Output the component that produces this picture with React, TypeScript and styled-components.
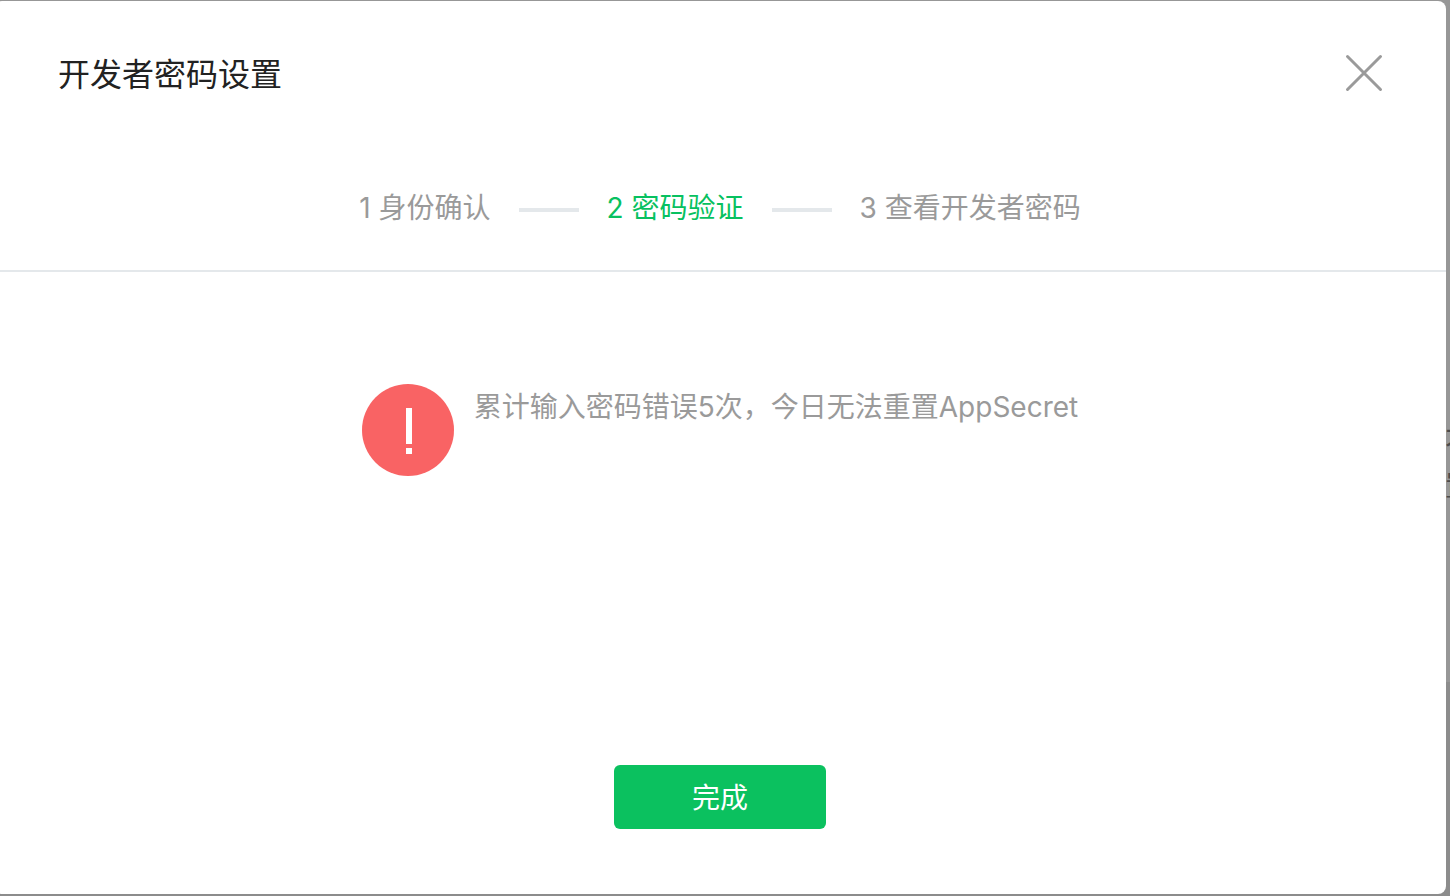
import React from "react";
import styled, { createGlobalStyle } from "styled-components";

const GlobalStyle = createGlobalStyle`
  *, *::before, *::after { box-sizing: border-box; }
  html, body { margin: 0; padding: 0; }
  body {
    background: #979797;
    font-family: Inter, "Noto Sans CJK SC", sans-serif;
    font-size: 28px;
    line-height: 40px;
    color: #9a9a9a;
    overflow: hidden;
  }
  button { font: inherit; border: 0; padding: 0; cursor: pointer; }
`;

const Backdrop = styled.div`
  position: relative;
  display: flex;
  min-height: 100vh;
  padding: 1px 4px 2px 0;
  background: linear-gradient(#979797 682px, #8c8c8c 682px);
  overflow: hidden;
`;

const PageText = styled.div`
  position: absolute;
  top: 420px;
  left: calc(100% - 5px);
  width: 28px;
  color: #4c4c4c;
  line-height: 44px;
`;

const Dialog = styled.section`
  position: relative;
  flex: 1;
  display: flex;
  flex-direction: column;
  margin-left: -6px;
  border-radius: 8px;
  background: #fff;
`;

const Header = styled.header`
  display: flex;
  align-items: center;
  justify-content: space-between;
  padding: 50px 60px 0 64px;
`;

const Title = styled.h1`
  margin: 0;
  padding-top: 4px;
  font-size: 32px;
  line-height: 40px;
  font-weight: 400;
  color: #222;
`;

const CloseButton = styled.button`
  display: flex;
  align-items: center;
  justify-content: center;
  width: 44px;
  height: 44px;
  background: transparent;
  color: #9a9a9a;
`;

const Steps = styled.ol`
  display: flex;
  justify-content: center;
  gap: 28px;
  margin: 0;
  padding: 93px 0 42px;
  list-style: none;
  border-bottom: 2px solid #e4e8eb;
`;

const Step = styled.li<{ $active?: boolean }>`
  display: flex;
  align-items: center;
  gap: 28px;
  color: ${(p) => (p.$active ? "#07c160" : "#9a9a9a")};

  &:not(:last-child)::after {
    content: "";
    width: 60px;
    height: 4px;
    margin-top: 4px;
    background: #e4e8eb;
  }
`;

const Message = styled.div`
  flex: 1;
  display: flex;
  justify-content: center;
  align-items: flex-start;
  gap: 20px;
  padding-top: 112px;
`;

const MessageText = styled.p`
  margin: 0;
  padding-top: 3px;
`;

const Footer = styled.footer`
  display: flex;
  justify-content: center;
  padding-bottom: 65px;
`;

const PrimaryButton = styled.button`
  width: 212px;
  height: 64px;
  padding-top: 2px;
  border-radius: 6px;
  background: #0bc15f;
  color: #fff;
`;

const steps = ["身份确认", "密码验证", "查看开发者密码"];
const current = 1;

export default function App() {
  return (
    <>
      <GlobalStyle />
      <Backdrop>
        <PageText aria-hidden="true">不置</PageText>
        <Dialog role="dialog" aria-modal="true" aria-labelledby="dialog-title">
          <Header>
            <Title id="dialog-title">开发者密码设置</Title>
            <CloseButton type="button" aria-label="关闭">
              <svg width="44" height="44" viewBox="0 0 44 44" fill="none" stroke="currentColor" strokeWidth="3" strokeLinecap="round">
                <path d="M5.5 5.5l33 33M38.5 5.5l-33 33" />
              </svg>
            </CloseButton>
          </Header>
          <Steps>
            {steps.map((label, i) => (
              <Step key={label} $active={i === current} aria-current={i === current ? "step" : undefined}>
                {`${i + 1} ${label}`}
              </Step>
            ))}
          </Steps>
          <Message role="alert">
            <svg width="92" height="92" viewBox="0 0 92 92" aria-hidden="true">
              <circle cx="46" cy="46" r="46" fill="#f96364" />
              <path d="M44 24h6v36h-6zM44 64h6v6h-6z" fill="#fff" />
            </svg>
            <MessageText>累计输入密码错误5次，今日无法重置AppSecret</MessageText>
          </Message>
          <Footer>
            <PrimaryButton type="button">完成</PrimaryButton>
          </Footer>
        </Dialog>
      </Backdrop>
    </>
  );
}
